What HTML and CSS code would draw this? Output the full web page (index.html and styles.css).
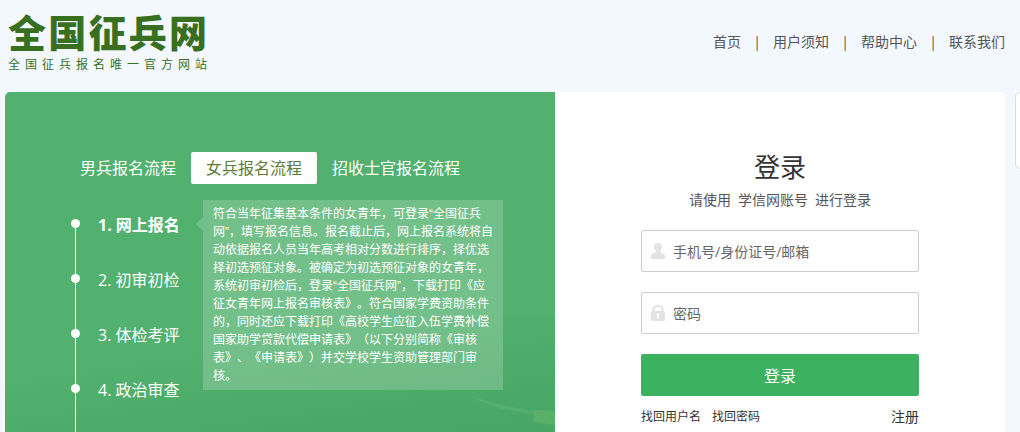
FILE: index.html
```html
<!DOCTYPE html>
<html lang="zh-CN">
<head>
<meta charset="utf-8">
<title>全国征兵网</title>
<link rel="stylesheet" href="styles.css">
</head>
<body>
<header class="header">
  <div class="brand">
    <h1 class="brand-name">全国征兵网</h1>
    <p class="brand-tagline">全国征兵报名唯一官方网站</p>
  </div>
  <nav class="nav">
    <a href="#">首页</a><span>|</span>
    <a href="#">用户须知</a><span>|</span>
    <a href="#">帮助中心</a><span>|</span>
    <a href="#">联系我们</a>
  </nav>
</header>
<main class="main">
  <section class="guide">
    <svg class="scenery" viewBox="0 0 550 120" preserveAspectRatio="none" aria-hidden="true">
      <defs>
        <linearGradient id="shade" x1="0.3" y1="0" x2="1" y2="1">
          <stop offset="0.2" stop-color="#2f8a50" stop-opacity="0"/>
          <stop offset="1" stop-color="#2f8a50" stop-opacity=".3"/>
        </linearGradient>
      </defs>
      <path d="M0 0H550V120H0Z" fill="url(#shade)"/>
      <path d="M466 80Q495 90 530 95L530 98Q490 95 466 80Z" fill="#8fd09a" fill-opacity=".15"/>
      <path d="M529 94L550 95L550 109L529 106Z" fill="#7cc46c" fill-opacity=".35"/>
    </svg>
    <div class="tabs">
      <button type="button" class="tab">男兵报名流程</button>
      <button type="button" class="tab tab-active">女兵报名流程</button>
      <button type="button" class="tab">招收士官报名流程</button>
    </div>
    <div class="flow">
      <ol class="steps">
        <li class="step step-active">1. 网上报名</li>
        <li class="step">2. 初审初检</li>
        <li class="step">3. 体检考评</li>
        <li class="step">4. 政治审查</li>
      </ol>
      <p class="tip">符合当年征集基本条件的女青年，可登录“全国征兵网”，填写报名信息。报名截止后，网上报名系统将自动依据报名人员当年高考相对分数进行排序，择优选择初选预征对象。被确定为初选预征对象的女青年，系统初审初检后，登录“全国征兵网”，下载打印《应征女青年网上报名审核表》。符合国家学费资助条件的，同时还应下载打印《高校学生应征入伍学费补偿国家助学贷款代偿申请表》（以下分别简称《审核表》、《申请表》）并交学校学生资助管理部门审核。</p>
    </div>
  </section>
  <section class="login">
    <form class="form">
      <h2 class="form-title">登录</h2>
      <p class="form-note"><span>请使用</span><span>学信网账号</span><span>进行登录</span></p>
      <label class="field">
        <svg class="field-icon" viewBox="0 0 14 16" aria-hidden="true"><path d="M7 0C9.400 0 11 1.600 11 4C11 5.800 10.200 7.100 9.200 7.900V9.200L12.600 10.800Q14 11.500 14 13V16H0V13Q0 11.500 1.400 10.800L4.800 9.200V7.900C3.800 7.100 3 5.800 3 4C3 1.600 4.600 0 7 0Z" fill="#e3e3e3"/></svg>
        <input class="field-input" type="text" placeholder="手机号/身份证号/邮箱" aria-label="手机号/身份证号/邮箱">
      </label>
      <label class="field">
        <svg class="field-icon" viewBox="0 0 14 16" aria-hidden="true"><path d="M2.500 7V4.500Q2.500 1 7 1T11.500 4.500V7" fill="none" stroke="#e3e3e3" stroke-width="2"/><path fill-rule="evenodd" d="M1.500 6H12.500Q14 6 14 7.500V14.500Q14 16 12.500 16H1.500Q0 16 0 14.500V7.500Q0 6 1.500 6ZM7 8.500A1.500 1.500 0 0 0 6.200 11.200V13.500H7.800V11.200A1.500 1.500 0 0 0 7 8.500Z" fill="#e3e3e3"/></svg>
        <input class="field-input" type="password" placeholder="密码" aria-label="密码">
      </label>
      <button type="submit" class="submit">登录</button>
      <div class="links">
        <a href="#">找回用户名</a>
        <a href="#">找回密码</a>
        <a href="#" class="register">注册</a>
      </div>
    </form>
  </section>
</main>
<aside class="side-tab" aria-hidden="true"></aside>
</body>
</html>
```
FILE: styles.css
```css
* {
  box-sizing: border-box;
}

body {
  margin: 0;
  min-height: 100vh;
  display: flex;
  flex-direction: column;
  background: #f3f8ff;
  color: #333;
  font-family: "Open Sans", "Noto Sans CJK SC", sans-serif;
  font-size: 14px;
  text-spacing-trim: space-all;
}

h1, h2, p, ol {
  margin: 0;
  padding: 0;
}

a {
  color: inherit;
  text-decoration: none;
}

button, input {
  font: inherit;
}

.header {
  display: flex;
  justify-content: space-between;
  height: 92px;
  padding: 10px 15px 0 8px;
}

.brand {
  width: 199px;
  color: #38701f;
  font-family: "Noto Sans CJK SC", sans-serif;
  text-align: justify;
  text-align-last: justify;
}

.brand-name {
  font-size: 38px;
  line-height: 42px;
  font-weight: 900;
  white-space: nowrap;
}

.brand-tagline {
  font-size: 12px;
  line-height: 24px;
}

.nav {
  display: flex;
  gap: 12px;
  height: 62px;
  align-items: center;
  color: #555;
}

.nav span {
  width: 8px;
  text-align: center;
}

.main {
  flex: 1;
  display: grid;
  grid-template-columns: minmax(0, 11fr) minmax(0, 9fr);
  margin: 0 15px 0 5px;
  border-radius: 5px 5px 0 0;
  overflow: hidden;
  background: #fff;
}

.guide {
  position: relative;
  display: flex;
  flex-direction: column;
  padding: 60px 52px 0 60px;
  background: #52b16e;
  color: #fff;
}

.scenery {
  position: absolute;
  left: 0;
  bottom: 0;
  width: 100%;
  height: 120px;
}

.tabs {
  display: flex;
}

.tab {
  height: 32px;
  padding: 0 15px;
  border: 0;
  border-radius: 2px;
  background: none;
  color: #fff;
  font-size: 16px;
  line-height: 32px;
  white-space: nowrap;
}

.tab-active {
  background: #fff;
  color: #5c7d3a;
}

.flow {
  position: relative;
  flex: 1;
  display: flex;
  align-items: flex-start;
  justify-content: space-between;
}

.steps {
  position: relative;
  align-self: stretch;
  padding-top: 12px;
  list-style: none;
}

.steps::before {
  content: "";
  position: absolute;
  left: 10px;
  top: 40px;
  bottom: 0;
  width: 1px;
  background: #fff;
}

.step {
  display: flex;
  align-items: center;
  gap: 18px;
  height: 55px;
  padding-left: 6px;
  font-size: 16px;
  white-space: nowrap;
}

.step::before {
  content: "";
  width: 9px;
  height: 9px;
  border-radius: 50%;
  background: #fff;
}

.step-active {
  font-weight: 700;
}

.tip {
  position: relative;
  width: 300px;
  margin-top: 16px;
  padding: 5px 8px 5px 10px;
  background: rgba(255, 255, 255, 0.2);
  font-family: "Liberation Sans", "Noto Sans CJK SC", sans-serif;
  font-size: 12px;
  line-height: 18px;
}

.tip::before {
  content: "";
  position: absolute;
  left: -7px;
  top: 17px;
  border: solid transparent;
  border-width: 7px 7px 7px 0;
  border-right-color: rgba(255, 255, 255, 0.2);
}

.login {
  display: flex;
  justify-content: center;
  padding-top: 56px;
}

.form {
  display: flex;
  flex-direction: column;
  width: 278px;
}

.form-title {
  font-size: 26px;
  line-height: 38px;
  font-weight: 400;
  text-align: center;
}

.form-note {
  display: flex;
  justify-content: center;
  gap: 7px;
  margin-bottom: 16px;
  color: #555;
  line-height: 28px;
}

.field {
  display: flex;
  align-items: center;
  gap: 8px;
  height: 42px;
  margin-bottom: 20px;
  padding: 0 9px;
  border: 1px solid #ccc;
  border-radius: 2px;
}

.field-icon {
  width: 14px;
  height: 16px;
}

.field-input {
  flex: 1;
  min-width: 0;
  padding: 0;
  border: 0;
  outline: 0;
  background: none;
}

.field-input::placeholder {
  color: #666;
}

.submit {
  height: 42px;
  border: 0;
  border-radius: 2px;
  background: #3cb261;
  color: #fff;
  font-size: 16px;
}

.links {
  display: flex;
  gap: 11px;
  align-items: center;
  height: 40px;
  font-size: 12px;
}

.register {
  margin-left: auto;
  font-size: 14px;
}

.side-tab {
  position: absolute;
  top: 92px;
  right: 0;
  width: 5px;
  height: 77px;
  border: 1px solid #ddd;
  border-right: 0;
  border-radius: 5px 0 0 5px;
  background: #fff;
}
```
